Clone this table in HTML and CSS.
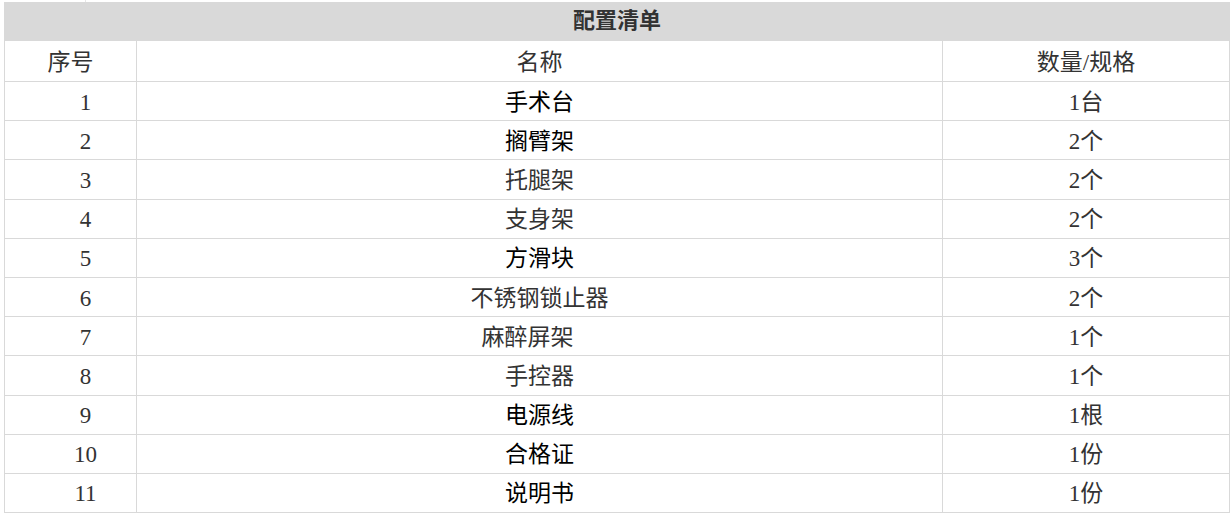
FILE: index.html
```html
<!DOCTYPE html>
<html lang="zh-CN">
<head>
<meta charset="utf-8">
<title>配置清单</title>
<link rel="stylesheet" href="styles.css">
</head>
<body>
<div class="prev"><span class="prev-line"></span></div>
<table class="list">
  <colgroup>
    <col class="c1">
    <col class="c2">
    <col class="c3">
  </colgroup>
  <thead>
    <tr class="title-row"><th colspan="3">配置清单</th></tr>
    <tr class="head-row"><td>序号</td><td>名称</td><td>数量/规格</td></tr>
  </thead>
  <tbody>
    <tr><td class="num">1</td><td class="dark">手术台</td><td>1台</td></tr>
    <tr><td class="num">2</td><td class="dark">搁臂架</td><td>2个</td></tr>
    <tr><td class="num">3</td><td>托腿架</td><td>2个</td></tr>
    <tr><td class="num">4</td><td>支身架</td><td>2个</td></tr>
    <tr><td class="num">5</td><td class="dark">方滑块</td><td>3个</td></tr>
    <tr><td class="num">6</td><td>不锈钢锁止器</td><td>2个</td></tr>
    <tr><td class="num">7</td><td class="shift">麻醉屏架</td><td>1个</td></tr>
    <tr><td class="num">8</td><td>手控器</td><td>1个</td></tr>
    <tr><td class="num">9</td><td class="dark">电源线</td><td>1根</td></tr>
    <tr><td class="num">10</td><td class="dark">合格证</td><td>1份</td></tr>
    <tr><td class="num">11</td><td class="dark">说明书</td><td>1份</td></tr>
  </tbody>
</table>
</body>
</html>
```

FILE: styles.css
```css
html, body {
  margin: 0;
  padding: 0;
  background: #ffffff;
}

body {
  font-family: "Liberation Serif", "Noto Sans CJK SC", serif;
  color: #333333;
}

.prev {
  height: 2px;
  padding-left: 85px;
  display: flex;
}

.prev-line {
  width: 1px;
  height: 2px;
  background: #e6e6e6;
}

.list {
  margin-left: 4px;
  width: 1225px;
  border-collapse: collapse;
  table-layout: fixed;
}

.c1 { width: 132px; }
.c2 { width: 806px; }
.c3 { width: 287px; }

.list th,
.list td {
  border: 1px solid #d9d9d9;
  text-align: center;
  vertical-align: middle;
  padding: 2px 0 0 0;
  font-size: 23px;
  font-weight: normal;
  line-height: 1;
  height: 36.2px;
  color: #333333;
}

.list td.num {
  padding-left: 30px;
}

.list td.shift {
  padding-right: 24px;
}

.list .head-row td {
  height: 38px;
}

.list .title-row th {
  background: #d9d9d9;
  font-weight: bold;
  font-size: 22px;
  height: 38px;
  padding-top: 0;
  border-top: none;
}

.list td.dark {
  color: #000000;
}
```
